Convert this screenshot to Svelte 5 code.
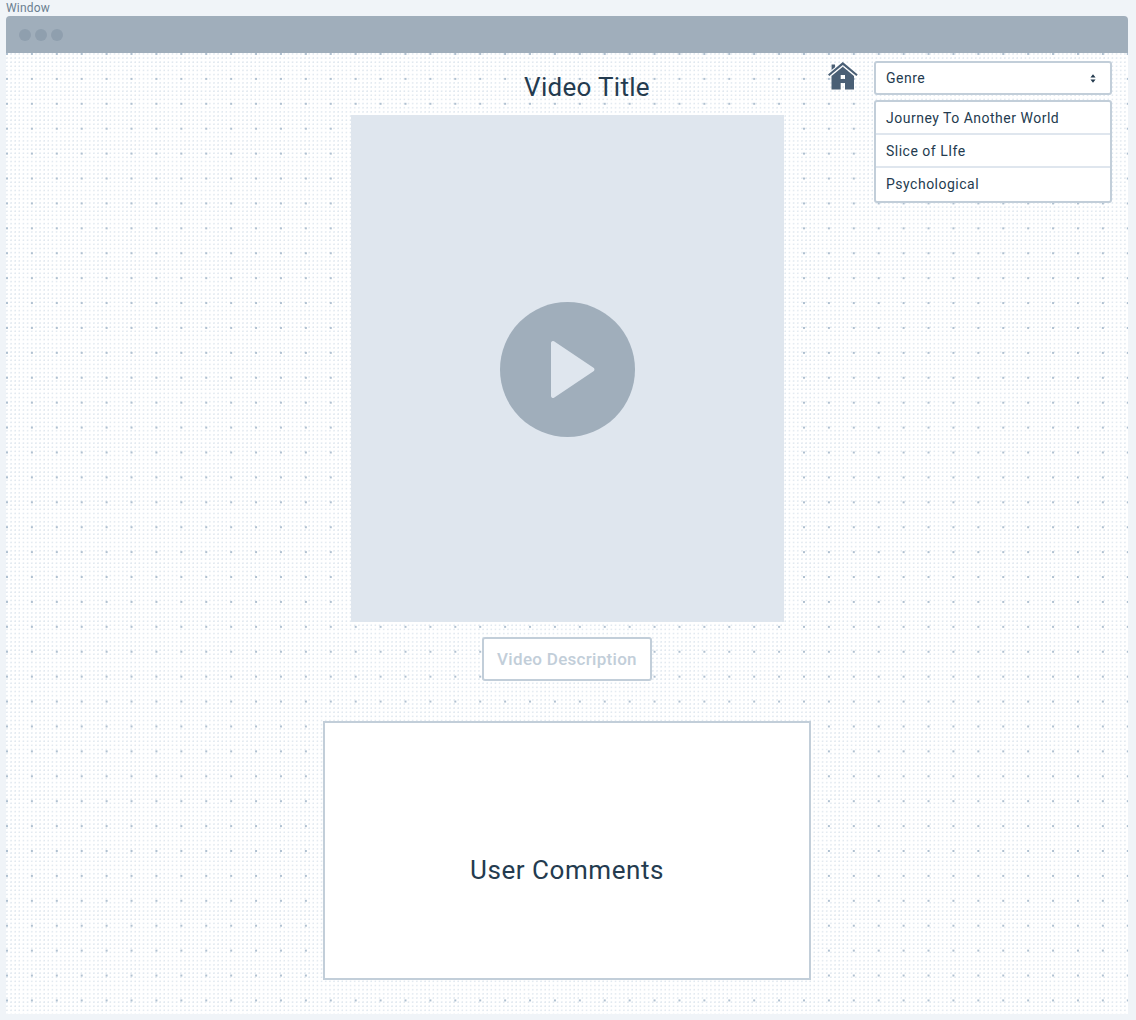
<script>
  const genres = ['Journey To Another World', 'Slice of LIfe', 'Psychological'];
</script>

<div class="page">
  <div class="window-label">Window</div>
  <div class="window">
    <div class="titlebar">
      <span class="light"></span>
      <span class="light"></span>
      <span class="light"></span>
    </div>

    <div class="canvas">
      <div class="corner">
        <svg class="home" viewBox="0 0 30 28" aria-label="Home">
          <path d="M14.800 0 L0 12.400 L1.300 14 L14.800 2.900 L28.400 14 L29.700 12.400 L14.800 0 Z M3.600 2.600 H7 V5.200 L3.600 8.100 Z" />
          <path fill-rule="evenodd" d="M14.800 4.800 L3.500 14 V27.500 H12.700 V21 H17 V27.500 H26 V14 Z M12.700 13 H17 V17 H12.700 Z" />
        </svg>
        <div class="menus">
          <div class="select">
            <span>Genre</span>
            <svg class="updown" viewBox="0 0 7 10"><path d="M3.500 0 L6.500 3.800 H.5 Z M3.500 10 L.5 6.200 H6.500 Z" /></svg>
          </div>
          <ul class="options">
            {#each genres as genre}
              <li>{genre}</li>
            {/each}
          </ul>
        </div>
      </div>

      <main class="content">
        <h1 class="title">Video Title</h1>
        <div class="video">
          <svg class="play" viewBox="0 0 135 135">
            <circle cx="67.500" cy="67.500" r="67.500" />
            <path d="M51 41 a2 2 0 0 1 3 -1.700 L93.500 65.800 a2 2 0 0 1 0 3.400 L54 95.700 a2 2 0 0 1 -3 -1.700 Z" />
          </svg>
        </div>
        <button class="description">Video Description</button>
        <section class="comments">User Comments</section>
      </main>
    </div>
  </div>
</div>

<style>
  :global(body) {
    margin: 0;
    background: #f0f4f8;
  }

  .page {
    width: 1136px;
    height: 1020px;
    box-sizing: border-box;
    padding: 0 8px 6px 6px;
    display: flex;
    flex-direction: column;
    font-family: "Roboto", "Liberation Sans", sans-serif;
    color: #243b4f;
    overflow: hidden;
  }

  .window-label {
    height: 16px;
    font-size: 12px;
    line-height: 16px;
    letter-spacing: 0.2px;
    color: #6b7f90;
  }

  .window {
    flex: 1;
    display: flex;
    flex-direction: column;
    min-height: 0;
    border-radius: 4px 4px 0 0;
    overflow: hidden;
  }

  .titlebar {
    flex: none;
    height: 37px;
    background: #a0aebb;
    display: flex;
    align-items: center;
    gap: 4px;
    padding-left: 13px;
  }

  .light {
    width: 12px;
    height: 12px;
    border-radius: 50%;
    background: #8f9fae;
  }

  /* grid in the reference is scaled down a bit, so 24.92 rather than 25 */
  .canvas {
    flex: 1;
    position: relative;
    background-color: #fff;
    background-image:
      radial-gradient(circle at 1px 1px, #afc0d0 .8px, transparent 1.2px),
      radial-gradient(circle at 1px 1px, #e0e8ef .6px, transparent 1.1px);
    background-size: 24.92px 24.92px, 4.153px 4.153px;
    background-position: 0 0, 0 0;
  }

  .corner {
    position: absolute;
    top: 8px;
    right: 16px;
    display: flex;
    gap: 16px;
  }

  .home {
    width: 30px;
    height: 28px;
    margin-top: 1px;
    fill: #4a5f75;
  }

  .menus {
    width: 238px;
    display: flex;
    flex-direction: column;
    gap: 5px;
  }

  .select {
    height: 34px;
    box-sizing: border-box;
    display: flex;
    align-items: center;
    justify-content: space-between;
    padding: 0 14px 0 10px;
    background: #fff;
    border: 2px solid #c2ced9;
    border-radius: 3px;
    font-size: 14px;
    letter-spacing: 0.5px;
  }

  .updown {
    width: 6px;
    height: 9px;
    fill: #243b4f;
  }

  .options {
    list-style: none;
    margin: 0;
    padding: 0;
    background: #fff;
    border: 2px solid #c2ced9;
    border-radius: 3px;
  }

  .options li {
    height: 33px;
    box-sizing: border-box;
    padding-left: 10px;
    font-size: 14px;
    letter-spacing: 0.5px;
    line-height: 33px;
    border-bottom: 2px solid #dfe6ee;
  }

  .options li:last-child {
    border-bottom: 0;
  }

  .content {
    display: flex;
    flex-direction: column;
    align-items: center;
  }

  .title {
    margin: 19px 0 0 40px;
    height: 43px;
    font-size: 26px;
    line-height: 30px;
    font-weight: 400;
    letter-spacing: 0.3px;
  }

  .video {
    width: 433px;
    height: 507px;
    background: #dfe6ee;
    display: flex;
    align-items: center;
    justify-content: center;
  }

  .play {
    width: 135px;
    height: 135px;
    margin-top: 1px;
    fill: #dfe6ee;
  }

  .play circle {
    fill: #a0aebb;
  }

  .description {
    margin-top: 15px;
    width: 170px;
    height: 44px;
    padding: 0;
    background: #fff;
    border: 2px solid #c2ced9;
    border-radius: 3px;
    font-family: inherit;
    font-size: 17px;
    font-weight: 500;
    letter-spacing: 0.3px;
    color: #c2ced9;
  }

  .comments {
    margin-top: 40px;
    width: 488px;
    height: 259px;
    box-sizing: border-box;
    padding-top: 38px;
    display: flex;
    align-items: center;
    justify-content: center;
    background: #fff;
    border: 2px solid #c2ced9;
    font-size: 26px;
    font-weight: 400;
    letter-spacing: 0.55px;
  }
</style>
